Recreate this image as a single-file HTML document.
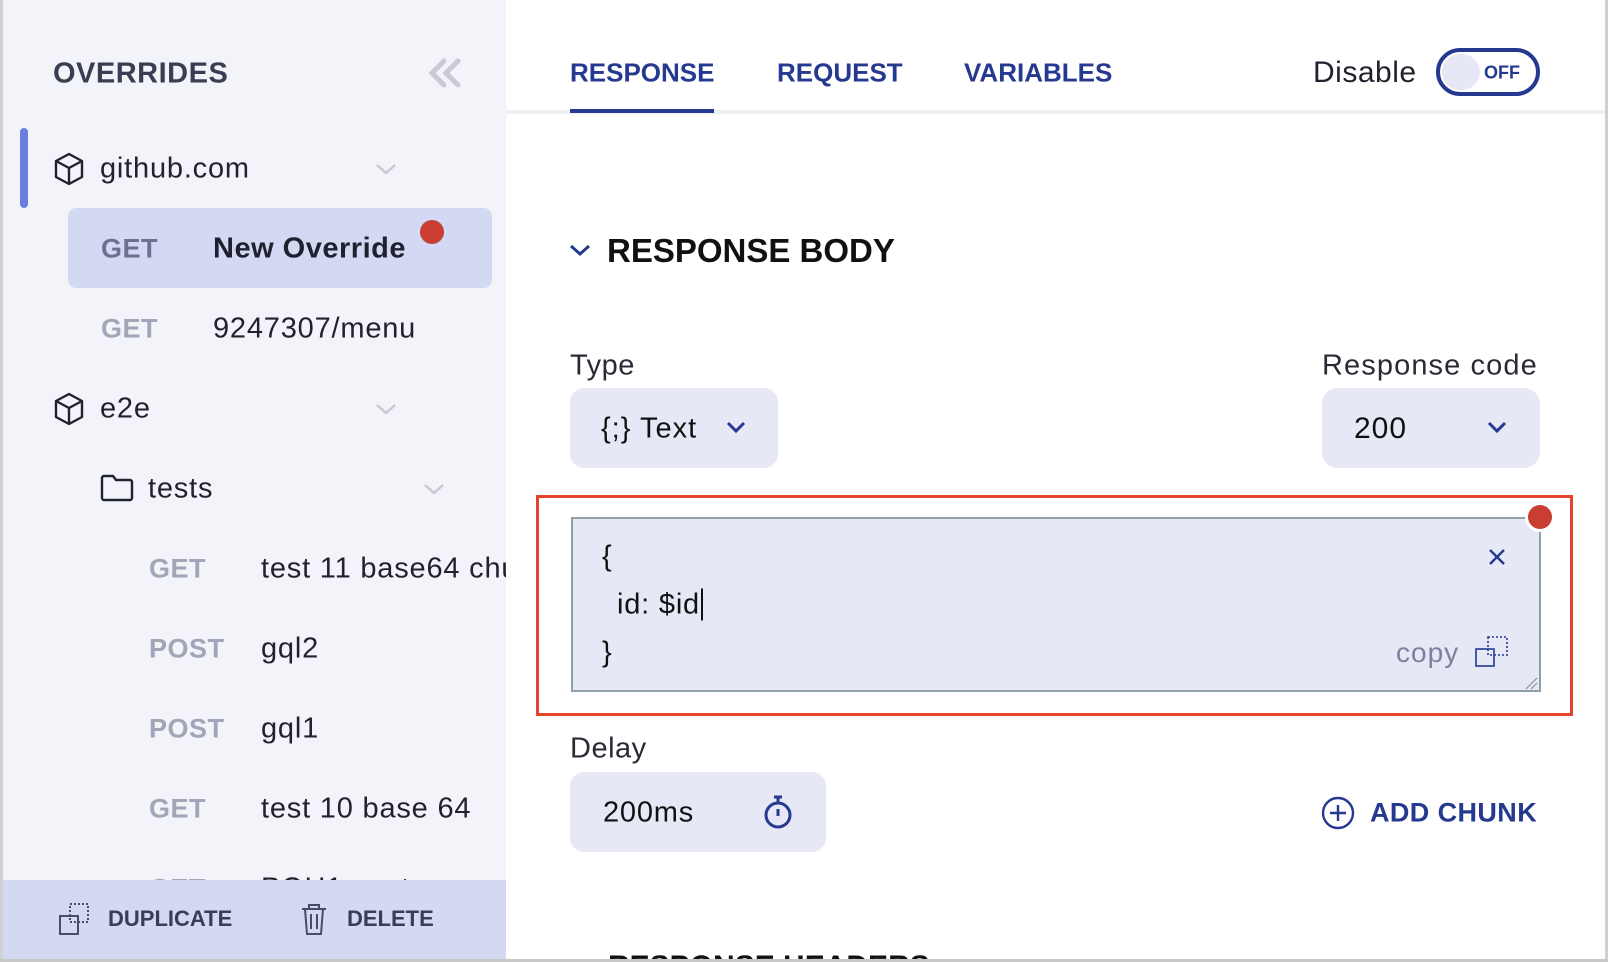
<!DOCTYPE html>
<html style="height:962px;overflow:hidden"><head><meta charset="utf-8"><style>
*{margin:0;padding:0;box-sizing:border-box}
body{width:1608px;height:962px;overflow:hidden;background:#fff;font-family:"Liberation Sans",sans-serif;position:relative;color:#1c1c28}
.a{position:absolute;white-space:nowrap}
.c{transform:translateY(-50%)}
#side{position:absolute;left:3px;top:0;width:503px;height:962px;background:#f3f4fa;overflow:hidden}
.m{font-weight:bold;color:#a3a4b8;font-size:27px;letter-spacing:0.5px}
.t{font-size:29px;color:#22222e;letter-spacing:0.8px}
.blue{color:#24398f}
</style></head><body>
<div class="a" style="left:0;top:0;width:3px;height:962px;background:#d0d0d0"></div>
<div class="a" style="left:1605px;top:0;width:3px;height:962px;background:#d0d0d0"></div>
<div id="side">
 <div class="a c" style="left:50px;top:74px;font-size:29px;font-weight:bold;color:#3b3d52;letter-spacing:0.5px">OVERRIDES</div>
 <svg class="a" style="left:424px;top:57px" width="36" height="32" viewBox="0 0 36 32" fill="none" stroke="#c9cad6" stroke-width="5" stroke-linecap="round"><path d="M17 4L5 16l12 12M31 4L19 16l12 12"/></svg>
 <div class="a" style="left:17px;top:128px;width:8px;height:80px;background:#6a7fe0;border-radius:4px"></div>
 <svg class="a" style="left:51px;top:152px" width="30" height="34" viewBox="0 0 30 34" fill="none" stroke="#22222e" stroke-width="2.4" stroke-linejoin="round"><path d="M15 2L28 9v16l-13 7-13-7V9z M2 9l13 7 13-7 M15 16v16"/></svg>
 <div class="a c t" style="left:97px;top:169px">github.com</div>
 <svg class="a" style="left:372px;top:162px" width="22" height="14" viewBox="0 0 22 14" fill="none" stroke="#c9cad6" stroke-width="2.5"><path d="M2 3l9 8 9-8"/></svg>
 <div class="a" style="left:65px;top:208px;width:424px;height:80px;background:#d4d9f3;border-radius:8px"></div>
 <div class="a c m" style="left:98px;top:249px;color:#6d7090">GET</div>
 <div class="a c t" style="left:210px;top:249px;font-weight:bold;color:#1f2130;letter-spacing:0.5px">New Override</div>
 <div class="a" style="left:417px;top:220px;width:24px;height:24px;border-radius:50%;background:#c83e33"></div>
 <div class="a c m" style="left:98px;top:329px">GET</div>
 <div class="a c t" style="left:210px;top:329px">9247307/menu</div>
 <svg class="a" style="left:51px;top:392px" width="30" height="34" viewBox="0 0 30 34" fill="none" stroke="#22222e" stroke-width="2.4" stroke-linejoin="round"><path d="M15 2L28 9v16l-13 7-13-7V9z M2 9l13 7 13-7 M15 16v16"/></svg>
 <div class="a c t" style="left:97px;top:409px">e2e</div>
 <svg class="a" style="left:372px;top:402px" width="22" height="14" viewBox="0 0 22 14" fill="none" stroke="#c9cad6" stroke-width="2.5"><path d="M2 3l9 8 9-8"/></svg>
 <svg class="a" style="left:97px;top:474px" width="34" height="28" viewBox="0 0 34 28" fill="none" stroke="#22222e" stroke-width="2.4" stroke-linejoin="round"><path d="M2 4a2 2 0 012-2h9l3 4h14a2 2 0 012 2v16a2 2 0 01-2 2H4a2 2 0 01-2-2z"/></svg>
 <div class="a c t" style="left:145px;top:489px">tests</div>
 <svg class="a" style="left:420px;top:482px" width="22" height="14" viewBox="0 0 22 14" fill="none" stroke="#c9cad6" stroke-width="2.5"><path d="M2 3l9 8 9-8"/></svg>
 <div class="a c m" style="left:146px;top:569px">GET</div>
 <div class="a c t" style="left:258px;top:569px">test 11 base64 chunk</div>
 <div class="a c m" style="left:146px;top:649px">POST</div>
 <div class="a c t" style="left:258px;top:649px">gql2</div>
 <div class="a c m" style="left:146px;top:729px">POST</div>
 <div class="a c t" style="left:258px;top:729px">gql1</div>
 <div class="a c m" style="left:146px;top:809px">GET</div>
 <div class="a c t" style="left:258px;top:809px">test 10 base 64</div>
 <div class="a c m" style="left:146px;top:889px">GET</div>
 <div class="a c t" style="left:258px;top:889px">POH1 post</div>
 <div class="a" style="left:0;top:880px;width:503px;height:82px;background:#d4d9f3"></div>
 <svg class="a" style="left:55px;top:902px" width="34" height="34" viewBox="0 0 34 34" fill="none" stroke="#4a4c63" stroke-width="2"><rect x="2" y="14" width="18" height="18"/><rect x="12" y="2" width="18" height="18" stroke-dasharray="2 2"/></svg>
 <div class="a c" style="left:105px;top:919px;font-size:22px;font-weight:bold;color:#3b3d52">DUPLICATE</div>
 <svg class="a" style="left:297px;top:902px" width="28" height="34" viewBox="0 0 28 34" fill="none" stroke="#4a4c63" stroke-width="2"><path d="M2 7h24M9 7V3h10v4M5 7l2 25h14l2-25M11 12v15M17 12v15"/></svg>
 <div class="a c" style="left:344px;top:919px;font-size:22px;font-weight:bold;color:#3b3d52">DELETE</div>
</div>
<div class="a" style="left:506px;top:110px;width:1099px;height:4px;background:#f0f1f7"></div>
<div class="a c blue" style="left:570px;top:73px;font-size:26px;font-weight:bold">RESPONSE</div>
<div class="a" style="left:570px;top:109px;width:144px;height:4px;background:#24398f"></div>
<div class="a c blue" style="left:777px;top:73px;font-size:26px;font-weight:bold">REQUEST</div>
<div class="a c blue" style="left:964px;top:73px;font-size:26px;font-weight:bold">VARIABLES</div>
<div class="a c" style="left:1313px;top:73px;font-size:30px;color:#22222e;letter-spacing:0.5px">Disable</div>
<div class="a" style="left:1436px;top:48px;width:104px;height:48px;border:4px solid #24398f;border-radius:24px"></div>
<div class="a" style="left:1442px;top:54px;width:38px;height:36px;border-radius:18px;background:#e6e9f5"></div>
<div class="a c blue" style="left:1484px;top:73px;font-size:18px;font-weight:bold">OFF</div>
<svg class="a" style="left:569px;top:243px" width="22" height="14" viewBox="0 0 22 14" fill="none" stroke="#24398f" stroke-width="3"><path d="M2 3l9 8 9-8"/></svg>
<div class="a c" style="left:607px;top:251px;font-size:33px;font-weight:bold;color:#111">RESPONSE BODY</div>
<div class="a c" style="left:570px;top:366px;font-size:29px;color:#2a2a36;letter-spacing:0.5px">Type</div>
<div class="a c" style="left:1322px;top:366px;font-size:29px;color:#2a2a36;letter-spacing:1.1px">Response code</div>
<div class="a" style="left:570px;top:388px;width:208px;height:80px;background:#e6e9f5;border-radius:14px"></div>
<div class="a c" style="left:601px;top:429px;font-size:29px;color:#111;letter-spacing:1px">{;} Text</div>
<svg class="a" style="left:726px;top:421px" width="20" height="13" viewBox="0 0 20 13" fill="none" stroke="#24398f" stroke-width="3"><path d="M2 2l8 8 8-8"/></svg>
<div class="a" style="left:1322px;top:388px;width:218px;height:80px;background:#e6e9f5;border-radius:16px"></div>
<div class="a c" style="left:1354px;top:429px;font-size:30px;color:#111;letter-spacing:1px">200</div>
<svg class="a" style="left:1487px;top:421px" width="20" height="13" viewBox="0 0 20 13" fill="none" stroke="#24398f" stroke-width="3"><path d="M2 2l8 8 8-8"/></svg>
<div class="a" style="left:536px;top:495px;width:1037px;height:221px;border:3px solid #e8412c"></div>
<div class="a" style="left:571px;top:517px;width:970px;height:175px;border:2px solid #8fa0a8;background:#e6e9f5"></div>
<div class="a" style="left:1525px;top:502px;width:30px;height:30px;border-radius:50%;background:#fff"></div>
<div class="a" style="left:1528px;top:505px;width:24px;height:24px;border-radius:50%;background:#c83e33"></div>
<div class="a c" style="left:602px;top:557px;font-size:29px;color:#111">{</div>
<div class="a c" style="left:617px;top:605px;font-size:29px;color:#111;letter-spacing:0.8px">id: $id<span style="border-left:2px solid #111;margin-left:1px"></span></div>
<div class="a c" style="left:602px;top:653px;font-size:29px;color:#111">}</div>
<svg class="a" style="left:1488px;top:548px" width="18" height="18" viewBox="0 0 18 18" stroke="#24398f" stroke-width="2.4"><path d="M2 2l14 14M16 2L2 16"/></svg>
<div class="a c" style="left:1396px;top:653px;font-size:28px;color:#7d80a0;letter-spacing:1px">copy</div>
<svg class="a" style="left:1475px;top:636px" width="34" height="34" viewBox="0 0 34 34" fill="none" stroke="#24398f" stroke-width="1.6"><rect x="1" y="13" width="18" height="17"/><rect x="13" y="1" width="19" height="18" stroke-dasharray="2 2"/></svg>
<svg class="a" style="left:1524px;top:676px" width="14" height="14" viewBox="0 0 14 14" stroke="#8a8c9a" stroke-width="1.2"><path d="M2 13L13 2M7 13l6-6"/></svg>
<div class="a c" style="left:570px;top:749px;font-size:29px;color:#2a2a36;letter-spacing:0.5px">Delay</div>
<div class="a" style="left:570px;top:772px;width:256px;height:80px;background:#e6e9f5;border-radius:14px"></div>
<div class="a c" style="left:603px;top:813px;font-size:29px;color:#111;letter-spacing:0.8px">200ms</div>
<svg class="a" style="left:762px;top:794px" width="32" height="36" viewBox="0 0 32 36" fill="none" stroke="#24398f" stroke-width="3"><circle cx="16" cy="21" r="12"/><path d="M12 3h8M16 3v6M16 15v7"/></svg>
<svg class="a" style="left:1321px;top:796px" width="34" height="34" viewBox="0 0 34 34" fill="none" stroke="#24398f" stroke-width="2.4"><circle cx="17" cy="17" r="15"/><path d="M17 9v16M9 17h16"/></svg>
<div class="a c blue" style="left:1370px;top:813px;font-size:27px;font-weight:bold;letter-spacing:0.4px">ADD CHUNK</div>
<div class="a" style="left:506px;top:900px;width:1099px;height:59px;overflow:hidden">
 <div class="a" style="left:102px;top:50px;font-size:30px;font-weight:bold;color:#111">RESPONSE HEADERS</div>
</div>
<div class="a" style="left:0;top:959px;width:1608px;height:3px;background:#c8c8c8"></div>
</body></html>
